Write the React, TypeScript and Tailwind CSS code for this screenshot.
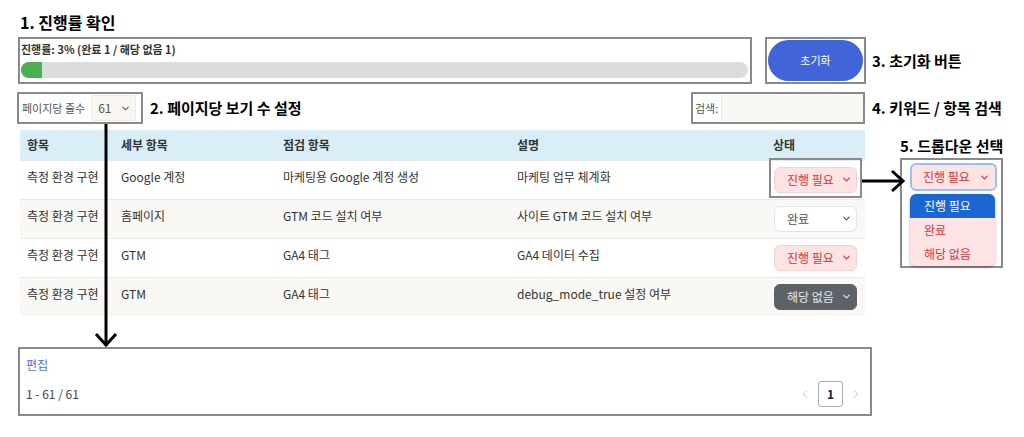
import { ChevronDown, ChevronLeft, ChevronRight } from 'lucide-react';

type Status = '진행 필요' | '완료' | '해당 없음';

const rows: { item: string; sub: string; check: string; desc: string; status: Status }[] = [
  { item: '측정 환경 구현', sub: 'Google 계정', check: '마케팅용 Google 계정 생성', desc: '마케팅 업무 체계화', status: '진행 필요' },
  { item: '측정 환경 구현', sub: '홈페이지', check: 'GTM 코드 설치 여부', desc: '사이트 GTM 코드 설치 여부', status: '완료' },
  { item: '측정 환경 구현', sub: 'GTM', check: 'GA4 태그', desc: 'GA4 데이터 수집', status: '진행 필요' },
  { item: '측정 환경 구현', sub: 'GTM', check: 'GA4 태그', desc: 'debug_mode_true 설정 여부', status: '해당 없음' },
];

function StatusSelect({ status }: { status: Status }) {
  const tone =
    status === '진행 필요'
      ? 'bg-[#fde3e3] border-[#f6d2d2] text-[#d8343c]'
      : status === '완료'
        ? 'bg-white border-[#dfe5ec] text-[#555]'
        : 'bg-[#5d6269] border-[#5d6269] text-[#e9e9e9]';
  return (
    <div className={`flex h-[26px] w-[83px] items-center justify-between rounded-md border pl-[12px] pr-[4px] text-[12px] ${tone}`}>
      <span>{status}</span>
      <ChevronDown size={11} strokeWidth={2.5} />
    </div>
  );
}

function Label({ children }: { children: React.ReactNode }) {
  return <div className="text-[15px] font-bold leading-[22px] text-black">{children}</div>;
}

export default function App() {
  return (
    <div className="relative h-[437px] w-[1024px] overflow-hidden bg-white pl-[18px] pt-[11px] font-['Noto_Sans_CJK_KR','Noto_Sans',sans-serif] text-[#333]">
      {/* 1. progress */}
      <div className="pl-[2px] text-[16px] font-bold leading-[22px] text-black">1. 진행률 확인</div>

      <div className="mt-[4px] flex items-center">
        <div className="flex h-[47px] w-[734px] flex-col border-2 border-[#8a8a8a] px-[1px]">
          <div className="mt-[1px] text-[11px] font-semibold leading-[18px] text-[#333]">진행률: 3% (완료 1 / 해당 없음 1)</div>
          <div className="mt-[4px] h-[16px] w-[727px] overflow-hidden rounded-full bg-[#dddddd]">
            <div className="h-full w-[21px] bg-[#4caf50]" />
          </div>
        </div>
        <div className="ml-[13px] flex h-[47px] w-[101px] items-center justify-center border-2 border-[#8a8a8a]">
          <button className="h-[41px] w-[95px] rounded-full bg-[#4165d9] text-[11px] text-white">초기화</button>
        </div>
        <div className="ml-[6px]">
          <Label>3. 초기화 버튼</Label>
        </div>
      </div>

      {/* 2. rows per page + 4. search */}
      <div className="mt-[8px] flex items-center">
        <div className="flex w-[847px] items-center justify-between">
          <div className="flex items-center">
            <div className="-ml-[1px] flex h-[32px] w-[126px] items-center border-2 border-[#8a8a8a] pl-[3px]">
              <span className="text-[11px] text-[#555]">페이지당 줄수</span>
              <div className="ml-[6px] flex h-[26px] w-[45px] items-center justify-between rounded-[3px] border border-[#efebe6] bg-[#faf7f2] pl-[6px] pr-[4px] text-[12px] text-[#555]">
                <span>61</span>
                <ChevronDown size={11} strokeWidth={2.5} className="text-[#666]" />
              </div>
            </div>
            <div className="ml-[7px]">
              <Label>2. 페이지당 보기 수 설정</Label>
            </div>
          </div>
          <div className="flex h-[32px] w-[174px] items-center border-2 border-[#8a8a8a] pl-[2px]">
            <span className="text-[11px] text-[#555]">검색:</span>
            <div className="ml-[3px] h-[28px] flex-1 border-l border-[#ebe7e1] bg-[#faf8f4]" />
          </div>
        </div>
        <div className="ml-[7px]">
          <Label>4. 키워드 / 항목 검색</Label>
        </div>
      </div>

      {/* table + 5. dropdown */}
      <div className="mt-[6px] flex items-start">
        <table className="ml-[2px] w-[845px] table-fixed border-collapse text-[12px]">
          <colgroup>
            <col className="w-[94px]" />
            <col className="w-[162px]" />
            <col className="w-[234px]" />
            <col className="w-[256px]" />
            <col className="w-[99px]" />
          </colgroup>
          <thead>
            <tr className="h-[30px] bg-[#daeef8] text-left font-bold text-[#333]">
              <th className="px-[7px]">항목</th>
              <th className="px-[7px]">세부 항목</th>
              <th className="px-[7px]">점검 항목</th>
              <th className="px-[7px]">설명</th>
              <th className="px-[7px]">상태</th>
            </tr>
          </thead>
          <tbody>
            {rows.map((r, i) => (
              <tr key={i} className={`h-[39px] border-t border-[#e9e9e9] align-top ${i % 2 ? 'bg-[#faf8f4]' : 'bg-white'}`}>
                <td className="px-[7px] pt-[7px] leading-[18px]">{r.item}</td>
                <td className="px-[7px] pt-[7px] leading-[18px]">{r.sub}</td>
                <td className="px-[7px] pt-[7px] leading-[18px]">{r.check}</td>
                <td className="px-[7px] pt-[7px] leading-[18px]">{r.desc}</td>
                <td className="pl-[8px] pt-[6px]">
                  <StatusSelect status={r.status} />
                </td>
              </tr>
            ))}
          </tbody>
        </table>

        <div className="ml-[35px] pt-[5px]">
          <Label>5. 드롭다운 선택</Label>
          <div className="mt-[1px] h-[110px] w-[103px] border-2 border-[#8a8a8a] bg-white pl-[8px] pt-[3px]">
            <div className="flex h-[28px] w-[87px] items-center justify-between rounded-md border-2 border-[#9cc0f5] bg-[#fde3e3] pl-[11px] pr-[5px] text-[12px] text-[#d8343c]">
              <span>진행 필요</span>
              <ChevronDown size={11} strokeWidth={2.5} />
            </div>
            <div className="mt-[3px] w-[85px] overflow-hidden rounded-md bg-[#fde3e3] text-[12px] leading-[24px] text-[#d8343c] shadow-[0_1px_3px_rgba(0,0,0,0.3)]">
              <div className="bg-[#1a66d2] pl-[14px] text-white">진행 필요</div>
              <div className="pl-[14px]">완료</div>
              <div className="pl-[14px]">해당 없음</div>
            </div>
          </div>
        </div>
      </div>

      {/* footer */}
      <div className="mt-[31px] flex h-[69px] w-[854px] flex-col border-2 border-[#8a8a8a] px-[6px]">
        <div className="mt-[7px] text-[12px] leading-[18px] text-[#4a74e0]">편집</div>
        <div className="mt-[7px] flex items-center justify-between">
          <span className="text-[12px] text-[#444]">1 - 61 / 61</span>
          <div className="mr-[1px] flex items-center gap-[6px] text-[#bbb]">
            <ChevronLeft size={14} strokeWidth={1.5} />
            <div className="flex h-[26px] w-[25px] items-center justify-center rounded-[3px] border border-[#aaa] text-[12px] font-bold text-[#222]">1</div>
            <ChevronRight size={14} strokeWidth={1.5} />
          </div>
        </div>
      </div>

      {/* annotation: box around first status select */}
      <div className="absolute left-[769px] top-[158px] h-[40px] w-[93px] border-2 border-[#8a8a8a]" />

      {/* annotation: arrow to dropdown */}
      <svg className="absolute left-[862px] top-[168px]" width="44" height="26" viewBox="0 0 44 26">
        <path d="M0 13H40" stroke="#000" strokeWidth="3" fill="none" />
        <path d="M30 3L41 13L30 23" stroke="#000" strokeWidth="3" fill="none" />
      </svg>

      {/* annotation: vertical arrow to footer */}
      <svg className="absolute left-[94px] top-[124px]" width="24" height="224" viewBox="0 0 24 224">
        <path d="M12 0V222" stroke="#000" strokeWidth="3" fill="none" />
        <path d="M2 210L12 221L22 210" stroke="#000" strokeWidth="3" fill="none" />
      </svg>
    </div>
  );
}
